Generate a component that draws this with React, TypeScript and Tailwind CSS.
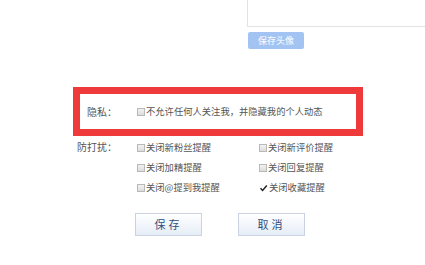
const font = { fontFamily: '"Noto Sans CJK SC", "Noto Sans", sans-serif' };

interface OptionProps {
  label: string;
  checked?: boolean;
}

function Option({ label, checked }: OptionProps) {
  return (
    <div className="flex items-center h-[20px]">
      {checked ? (
        <svg width="9" height="8" viewBox="0 0 9 8" className="shrink-0">
          <path d="M1.5 4.2 L3.6 6.4 L7.8 1.6" stroke="#222" strokeWidth="1.5" fill="none" />
        </svg>
      ) : (
        <span className="w-[8px] h-[8px] shrink-0 border border-[#b9b9b9] bg-gradient-to-b from-[#f2f2f2] to-[#dcdcdc]" />
      )}
      <span className="ml-[1px] text-[9.3px] text-[#555] whitespace-nowrap leading-none">{label}</span>
    </div>
  );
}

export default function App() {
  const rows: OptionProps[][] = [
    [{ label: "关闭新粉丝提醒" }, { label: "关闭新评价提醒" }],
    [{ label: "关闭加精提醒" }, { label: "关闭回复提醒" }],
    [{ label: "关闭@提到我提醒" }, { label: "关闭收藏提醒", checked: true }],
  ];

  return (
    <div className="w-[425px] h-[265px] bg-white overflow-hidden" style={font}>
      <div className="ml-[247px] h-[27px] border-l border-b border-[#e3e3e3]" />
      <div className="ml-[248px] mt-[5px] w-[56px] h-[17px] rounded-[2px] bg-[#a3c4f3] text-white text-[9px] flex items-center justify-center">
        保存头像
      </div>

      {/* 隐私 */}
      <div className="ml-[73px] mt-[38px] w-[290px] h-[49px] border-[7px] border-[#ee3a3a] flex items-center">
        <div className="w-[37px] text-right text-[10px] text-[#555]">隐私：</div>
        <div className="ml-[20px]">
          <Option label="不允许任何人关注我，并隐藏我的个人动态" />
        </div>
      </div>

      {/* 防打扰 */}
      <div className="ml-[79px] mt-[2px] flex">
        <div className="w-[38px] h-[17px] flex items-center justify-end text-[10px] text-[#555] whitespace-nowrap">防打扰：</div>
        <div className="ml-[20px] grid grid-cols-[122px_auto]">
          {rows.map((row, i) =>
            row.map((opt, j) => <Option key={`${i}-${j}`} label={opt.label} checked={opt.checked} />)
          )}
        </div>
      </div>

      <div className="ml-[135px] mt-[15px] flex gap-[36px]">
        <button className="w-[67px] h-[23px] border border-[#c9d3e2] bg-gradient-to-b from-white to-[#e6edf7] text-[11px] text-[#2f4f7f] tracking-[3px]">
          保存
        </button>
        <button className="w-[67px] h-[23px] border border-[#c9d3e2] bg-gradient-to-b from-white to-[#e6edf7] text-[11px] text-[#2f4f7f] tracking-[3px]">
          取消
        </button>
      </div>
    </div>
  );
}
